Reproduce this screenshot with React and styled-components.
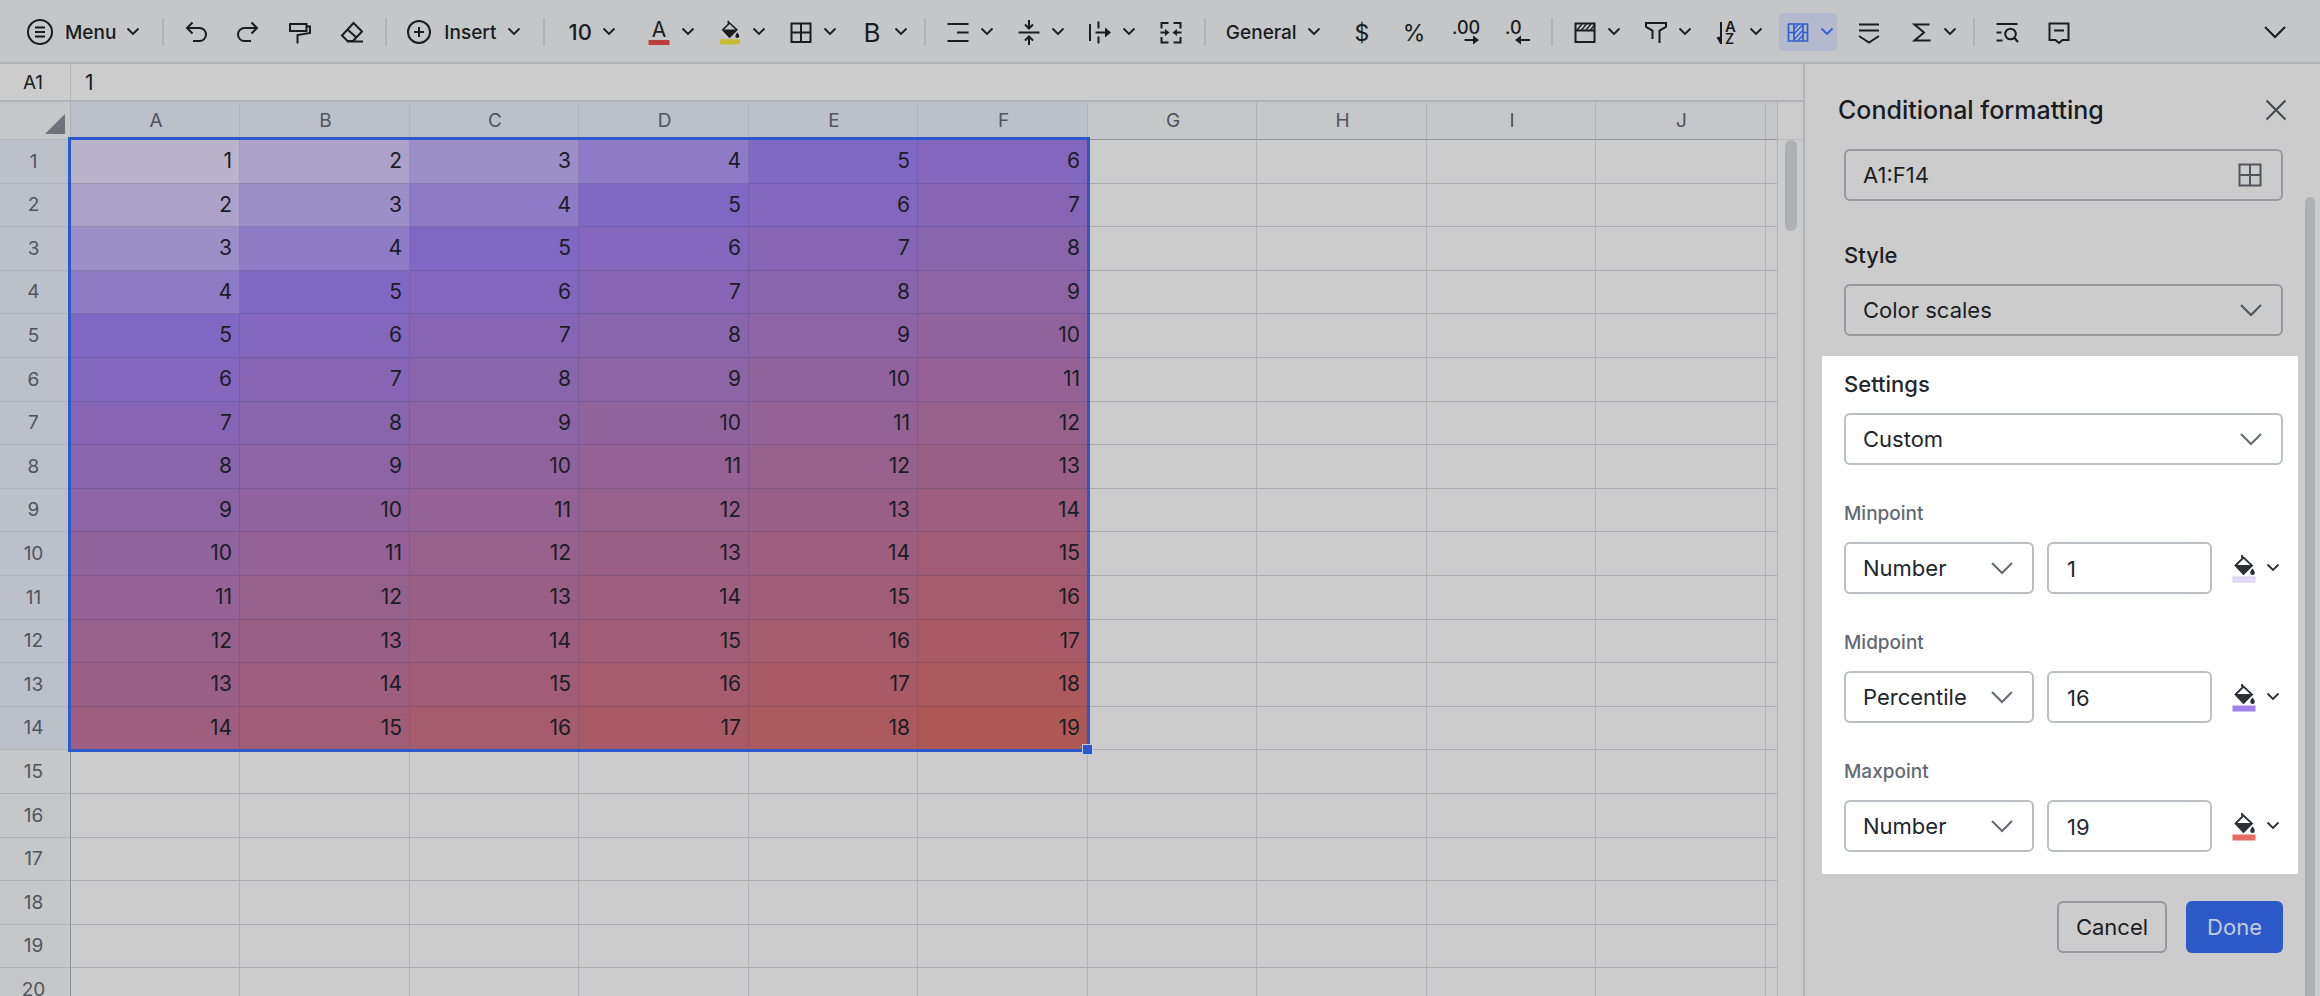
// src/App.jsx

import React, { useState } from "react"
import styled, { createGlobalStyle } from "styled-components"

const GlobalStyle = createGlobalStyle`
    * {
        box-sizing: border-box;
    }

    body {
        margin: 0;
        background: #cccccc;
        color: #191c21;
        font-family: Inter, "Liberation Sans", sans-serif;
    }

    button, input, select {
        margin: 0;
        font-family: inherit;
        color: inherit;
    }
`;

const Page = styled.div`
    display: flex;
    flex-direction: column;
    height: 100vh;
    overflow: hidden;
`;

/* ---------- toolbar ---------- */

const Toolbar = styled.header`
    display: flex;
    flex: none;
    align-items: center;
    gap: 13px;
    height: 64px;
    padding: 2px 26px 0 19px;
    border-bottom: 2px solid #b1b3b6;
    background: #c4c6c7;
`;

const ToolButton = styled.button`
    display: flex;
    flex: none;
    align-items: center;
    gap: 11px;
    height: 38px;
    padding: ${(props) => (props.$menu ? "0 4px 0 7px" : "0 8px 0 7px")};
    border: 0;
    border-radius: 6px;
    background: ${(props) => (props.$active ? "#b3bace" : "transparent")};
    color: ${(props) => (props.$active ? "#2f5fd0" : "inherit")};
    cursor: pointer;
`;

const TextButton = styled(ToolButton)`
    padding: ${(props) => (props.$large ? "0 12px 0 9px" : "0 10px 0 7px")};
    font-size: ${(props) => (props.$large ? "22px" : "19px")};
    font-weight: 500;
`;

const Caption = styled.span`
    padding-left: 2px;
`;

const Divider = styled.span`
    flex: none;
    width: 2px;
    height: 28px;
    background: #b1b3b6;
`;

const Spacer = styled.span`
    flex: 1;
`;

const Icon = styled.svg`
    display: block;
    flex: none;
    width: ${(props) => props.$w || 24}px;
    height: ${(props) => props.$h || 28}px;
    overflow: visible;
    fill: none;
    stroke: currentColor;
    stroke-width: 2;

    .solid {
        fill: currentColor;
        stroke: none;
    }

    .thin {
        stroke-width: 1.3;
    }

    text {
        fill: currentColor;
        stroke: none;
        font-family: Inter, sans-serif;
    }
`;

/* ---------- sheet ---------- */

const Workspace = styled.main`
    display: flex;
    flex: 1;
    min-height: 0;
`;

const SheetArea = styled.section`
    display: flex;
    flex: 1;
    flex-direction: column;
    min-width: 0;
`;

const FormulaBar = styled.div`
    display: flex;
    flex: none;
    height: 38px;
    border-bottom: 2px solid #b1b3b6;
`;

const NameBox = styled.input`
    width: 71px;
    padding: 0 4px 0 0;
    border: 0;
    border-right: 1px solid #b1b3b6;
    background: transparent;
    font-size: 19px;
    text-align: center;
`;

const FormulaInput = styled.input`
    flex: 1;
    min-width: 0;
    padding: 0 14px;
    border: 0;
    background: transparent;
    font-size: 21px;
`;

const GridRow = styled.div`
    display: flex;
    flex: 1;
    min-height: 0;
`;

const GridViewport = styled.div`
    position: relative;
    flex: 1;
    min-width: 0;
    overflow: hidden;
    border-right: 1px solid #b3b5b7;
`;

const Table = styled.table`
    width: 100%;
    table-layout: fixed;
    border-collapse: separate;
    border-spacing: 0;

    thead tr {
        height: 38px;
    }

    tbody tr {
        height: 44px;
    }

    tbody tr:nth-child(5n + 2),
    tbody tr:nth-child(5n + 4) {
        height: 43px;
    }
`;

const Corner = styled.td`
    width: 71px;
    padding: 0 5px 5px 0;
    border-right: 1px solid #b1b3b6;
    border-bottom: 1px solid #b1b3b6;
    background: #c6c7c9;
    vertical-align: bottom;

    svg {
        margin-left: auto;
    }
`;

const ColumnHead = styled.th`
    width: ${(props) => (props.$wide ? 170 : 169)}px;
    padding: 0 0 0 2px;
    border-right: 1px solid #b0b3b8;
    border-bottom: 1px solid #8f9195;
    background: ${(props) => (props.$selected ? "#bcc0c8" : "#c6c7c9")};
    color: #50555d;
    font-size: 19px;
    font-weight: 400;
    line-height: 24px;
`;

/* takes the width that is left after the last column */
const RestHead = styled.td`
    padding: 0;
    border-bottom: 1px solid #8f9195;
    background: #c6c7c9;
`;

const RowHead = styled.th`
    width: 71px;
    padding: 0 3px 0 0;
    border-right: 1px solid #8c8e93;
    border-bottom: 1px solid #b0b2b5;
    background: ${(props) => (props.$selected ? "#bcc0c8" : "#c6c7c9")};
    color: #50555d;
    font-size: 19px;
    font-weight: 400;
    line-height: 24px;
`;

const Cell = styled.td`
    padding: 0 7px 1px 0;
    border-right: 1px solid rgba(40, 50, 80, 0.16);
    border-bottom: 1px solid rgba(40, 50, 80, 0.2);
    color: #1b1d26;
    font-size: 21px;
    line-height: 24px;
    text-align: right;

    &:last-child {
        border-right: 0;
    }
`;

/* outline of A1:F14, laid over the cells */
const Selection = styled.div`
    position: absolute;
    top: 35px;
    left: 68px;
    width: 1022px;
    height: 615px;
    border: 3px solid #2b59cb;
    pointer-events: none;

    &::after {
        content: "";
        position: absolute;
        right: -6px;
        bottom: -6px;
        width: 9px;
        height: 9px;
        border: 1px solid #c9ccd4;
        background: #2b59cb;
    }
`;

const Gutter = styled.div`
    flex: none;
    width: 25px;
`;

const GutterHead = styled.div`
    height: 38px;
    border-bottom: 1px solid #b9babc;
`;

const SheetThumb = styled.div`
    width: 12px;
    height: 91px;
    margin: 0 auto;
    border-radius: 6px;
    background: #afb0b4;
`;

/* ---------- side panel ---------- */

const Panel = styled.aside`
    display: flex;
    flex: none;
    width: 517px;
    border-left: 2px solid #b1b3b6;
`;

const PanelContent = styled.form`
    flex: 1;
    min-width: 0;
    padding: 0 7px 0 17px;
`;

const PanelHead = styled.div`
    display: flex;
    align-items: center;
    justify-content: space-between;
    height: 85px;
    padding: 6px 11px 0 16px;
`;

const Title = styled.h2`
    margin: 0;
    font-size: 25px;
    font-weight: 500;
    line-height: 32px;
`;

const CloseButton = styled.button`
    padding: 0;
    border: 0;
    background: transparent;
    color: #43474e;
    cursor: pointer;
`;

const Section = styled.section`
    padding: ${(props) => (props.$highlight ? "16px 15px 22px 22px" : "0 15px 20px 22px")};
    background: ${(props) => (props.$highlight ? "#ffffff" : "transparent")};
    color: ${(props) => (props.$highlight ? "#22262d" : "#1b1e23")};
    --line: ${(props) => (props.$highlight ? "#bbbfc4" : "#96989d")};
    --muted: ${(props) => (props.$highlight ? "#646a73" : "#50555c")};
`;

const FieldLabel = styled.label`
    display: block;
    margin: ${(props) => props.$top || 0}px 0 17px;
    font-size: 22px;
    font-weight: 500;
    line-height: 24px;
`;

const PointLabel = styled.label`
    display: block;
    margin: 37px 0 16px;
    color: var(--muted);
    font-size: 19px;
    font-weight: 500;
    line-height: 24px;
`;

/* the control and its glyph share one grid cell */
const Field = styled.div`
    display: grid;
    align-items: center;

    & > * {
        grid-area: 1 / 1;
    }

    svg {
        justify-self: end;
        margin-right: 21px;
        color: var(--muted);
        pointer-events: none;
    }
`;

const Input = styled.input`
    width: 100%;
    min-width: 0;
    height: 52px;
    padding: 0 17px;
    border: 2px solid var(--line);
    border-radius: 6px;
    background: transparent;
    font-size: 22px;
`;

const ValueInput = styled(Input)`
    padding: 2px 18px 0;
`;

const Select = styled.select`
    width: 100%;
    height: 52px;
    padding: 0 17px;
    border: 2px solid var(--line);
    border-radius: 6px;
    background: transparent;
    font-size: 22px;
    appearance: none;
`;

const PointRow = styled.div`
    display: grid;
    grid-template-columns: 190px 1fr auto;
    gap: 13px;
`;

const ColorButton = styled.button`
    display: flex;
    align-items: center;
    gap: 11px;
    padding: 0 4px 0 7px;
    border: 0;
    background: transparent;
    color: #2b2f36;
    cursor: pointer;
`;

const Footer = styled.div`
    display: flex;
    justify-content: flex-end;
    gap: 19px;
    padding: 27px 15px 0 0;
`;

const ActionButton = styled.button`
    height: 52px;
    padding: 0 ${(props) => (props.$primary ? 21 : 17)}px;
    border: ${(props) => (props.$primary ? "0" : "2px solid #96989d")};
    border-radius: 6px;
    background: ${(props) => (props.$primary ? "#2c5ac8" : "transparent")};
    color: ${(props) => (props.$primary ? "#c3cbde" : "#1b1e23")};
    font-size: 22px;
    cursor: pointer;
`;

const PanelTrack = styled.div`
    flex: none;
    width: 15px;
    padding-top: 133px;
`;

const PanelThumb = styled.div`
    width: 10px;
    height: 100%;
    border-radius: 5px 5px 0 0;
    background: #afb0b2;
`;

/* ---------- icons ---------- */

const Chevron = () => (
    <Icon $w={12} $h={8} viewBox="0 0 12 8">
        <path d="M0.500 0.500L6 6l5.500-5.500" strokeWidth="1.8" />
    </Icon>
)

const BigChevron = () => (
    <Icon $w={22} $h={12} viewBox="0 0 22 12">
        <path d="M1 1l10 10L21 1" />
    </Icon>
)

const Bucket = ({ bar, line, small }) => (
    <Icon $h={small ? 24 : 28} viewBox="0 0 24 28">
        <path d="M10 1v3M3.500 11.500L11.500 3.500l8.500 8-8.500 8.500z" strokeWidth="1.8" />
        <path className="solid" d="M3 11h17.500l-9 9.500z" />
        <path className="solid" d="M20.500 14.500c1.600 2 2.300 3.200 2.300 4.300a2.300 2.300 0 0 1-4.600 0c0-1.100.7-2.300 2.300-4.300z" />
        <rect x="1" y="23" width="22" height="5" style={{ fill: bar, stroke: line || bar }} strokeWidth="1" />
    </Icon>
)

const Grid = () => (
    <Icon $h={24} viewBox="0 0 24 24">
        <path d="M1.500 1.500h21v21h-21zM12 2v20M2 12h20" />
    </Icon>
)

const icons = {
    undo: <path d="M8.500 4.500L3 10l5.500 5.500M3 10h12.500a6.500 6.500 0 0 1 0 13H9" />,
    redo: <path d="M15.500 4.500L21 10l-5.500 5.500M21 10H8.500a6.500 6.500 0 0 0 0 13H15" />,
    painter: <path d="M2 6h16.500v7H2zM18.500 8.500H22V15l-12.500 2v8.500" />,
    eraser: <path d="M13.500 5l8.500 8.500-9 9.500H7.500L2 17.500zM7.500 11.500L17 20M7 23.500h16" />,
    borders: <path d="M2.500 5.500h19V24h-19zM12 5.500V24M2.500 14.500h19" />,
    align: <path d="M1.500 6h21M11 14.500h11.500M1.500 23h21" />,
    valign: <path d="M1.500 14.500h21M12 2v8M8 6.500l4 4 4-4M12 27v-8M8 22.500l4-4 4 4" />,
    overflow: (
        <>
            <path d="M2 6v17M10.500 3.500v7M10.500 18.500v7M7.500 14.500h11" />
            <path className="solid" d="M17 9.500l6 5-6 5z" />
        </>
    ),
    merge: (
        <>
            <path d="M9.500 5H2.500v5.500M14.500 5h7v5.500M9.500 24.500h-7V19M14.500 24.500h7V19M1.500 14.500h5M22.500 14.500h-5" />
            <path className="solid" d="M6 11l4.500 3.500L6 18zM18 11l-4.500 3.500L18 18z" />
        </>
    ),
    freeze: (
        <>
            <path d="M2.500 5.500h19V24h-19zM2.500 12.500h19" />
            <path className="thin" d="M4 12l5-6M8.500 12l5-6M13 12l5-6M17.500 12l4-5" />
        </>
    ),
    filter: <path d="M8.500 21v-8.500L2 9V5h20v4l-6.500 3.500V25" />,
    sort: (
        <>
            <path d="M6 4v22" />
            <path className="solid" d="M1.500 19.500L5 18.500v7z" />
            <text x="10" y="14" fontSize="15" fontWeight="600">A</text>
            <text x="10" y="26" fontSize="14" fontWeight="600">Z</text>
        </>
    ),
    conditional: (
        <>
            <path d="M2.500 6h19v17h-19zM8 6v17M17 6v17M2.500 14.500H8M17 14.500h4.500" strokeWidth="1.7" />
            <path className="thin" d="M8 11l5-5M8 16l9-9.500M8 21.500l9-9.500M12 22.500l5-5.500" />
        </>
    ),
    collapse: <path d="M2 6.500h20M2 12.500h20M2 18l10 6.500L22 18" />,
    sum: <path d="M20.500 6.500H5.500l9.500 8-9.500 8h16" />,
    find: (
        <>
            <path d="M1.500 6h21M1.500 14.500h5M1.500 22.500h6" />
            <circle cx="15.500" cy="16" r="5.300" />
            <path d="M19.500 20l3.500 4" />
        </>
    ),
    comment: <path d="M2.500 5.500h19v16.500h-6L12 25l-3.500-3H2.500zM7 12.500h10" />,
}

const toolIcon = (name) => <Icon viewBox="0 0 24 28">{icons[name]}</Icon>

const fontColorIcon = (
    <Icon viewBox="0 0 24 28">
        <text x="12" y="19" fontSize="21" textAnchor="middle">A</text>
        <rect x="2" y="22.500" width="20" height="4" style={{ fill: "#b9403b", stroke: "#b9403b" }} strokeWidth="1" />
    </Icon>
)

const boldIcon = (
    <Icon viewBox="0 0 24 28">
        <text x="12" y="24" fontSize="26" textAnchor="middle">B</text>
    </Icon>
)

const signIcon = (sign) => (
    <Icon viewBox="0 0 24 28">
        <text x="12" y="23" fontSize="23" textAnchor="middle">{sign}</text>
    </Icon>
)

const moreDecimals = (
    <Icon viewBox="0 0 24 28">
        <text x="-2" y="16" fontSize="18" fontWeight="500">.00</text>
        <path d="M10.500 22h11" />
        <path className="solid" d="M19 17.500l6 4.500-6 4.500z" />
    </Icon>
)

const fewerDecimals = (
    <Icon viewBox="0 0 24 28">
        <text x="-1" y="16" fontSize="18" fontWeight="500">.0</text>
        <path d="M12 22h12" />
        <path className="solid" d="M15 17.500L9 22l6 4.500z" />
    </Icon>
)

/* ---------- data ---------- */

const columns = "ABCDEFGHIJ".split("")
const rows = Array.from({ length: 20 }, (_, i) => i + 1)
const selectedColumns = 6
const selectedRows = 14

const low = [185, 180, 202]
const middle = [127, 104, 196]
const high = [175, 89, 86]

function mix(from, to, ratio) {
    return `rgb(${from.map((c, i) => Math.round(c + (to[i] - c) * ratio)).join(", ")})`
}

function scaleColor(value) {
    return value < 5 ? mix(low, middle, (value - 1) / 4) : mix(middle, high, (value - 5) / 14)
}

const startPoints = [
    { id: "min", label: "Minpoint", type: "Number", value: "1", color: "#e5dbf9", line: "#d2c8e8" },
    { id: "mid", label: "Midpoint", type: "Percentile", value: "16", color: "#a083ec" },
    { id: "max", label: "Maxpoint", type: "Number", value: "19", color: "#e56d66" },
]

function MenuTool({ label, active, children }) {
    return (
        <ToolButton type="button" aria-label={label} $menu $active={active}>
            {children}
            <Chevron />
        </ToolButton>
    )
}

function Tool({ label, children }) {
    return <ToolButton type="button" aria-label={label}>{children}</ToolButton>
}

function TopToolbar() {
    return (
        <Toolbar>
            <TextButton type="button">
                <Icon $w={28} viewBox="0 0 28 28">
                    <circle cx="14" cy="14" r="12" />
                    <path d="M9 9.500h10M9 14h10M9 18.500h10" />
                </Icon>
                Menu
                <Chevron />
            </TextButton>
            <Divider />
            <Tool label="Undo">{toolIcon("undo")}</Tool>
            <Tool label="Redo">{toolIcon("redo")}</Tool>
            <Tool label="Format painter">{toolIcon("painter")}</Tool>
            <Tool label="Clear format">{toolIcon("eraser")}</Tool>
            <Divider />
            <TextButton type="button">
                <Icon viewBox="0 0 24 28">
                    <circle cx="12" cy="14" r="11" />
                    <path d="M12 9v10M7 14h10" />
                </Icon>
                <Caption>Insert</Caption>
                <Chevron />
            </TextButton>
            <Divider />
            <TextButton type="button" $large aria-label="Font size 10">
                <Caption>10</Caption>
                <Chevron />
            </TextButton>
            <MenuTool label="Font color">{fontColorIcon}</MenuTool>
            <MenuTool label="Fill color"><Bucket small bar="#c6bd35" /></MenuTool>
            <MenuTool label="Borders">{toolIcon("borders")}</MenuTool>
            <MenuTool label="Bold">{boldIcon}</MenuTool>
            <Divider />
            <MenuTool label="Horizontal align">{toolIcon("align")}</MenuTool>
            <MenuTool label="Vertical align">{toolIcon("valign")}</MenuTool>
            <MenuTool label="Text overflow">{toolIcon("overflow")}</MenuTool>
            <Tool label="Merge cells">{toolIcon("merge")}</Tool>
            <Divider />
            <TextButton type="button">
                General
                <Chevron />
            </TextButton>
            <Tool label="Currency">{signIcon("$")}</Tool>
            <Tool label="Percent">{signIcon("%")}</Tool>
            <Tool label="More decimals">{moreDecimals}</Tool>
            <Tool label="Fewer decimals">{fewerDecimals}</Tool>
            <Divider />
            <MenuTool label="Freeze">{toolIcon("freeze")}</MenuTool>
            <MenuTool label="Filter">{toolIcon("filter")}</MenuTool>
            <MenuTool label="Sort">{toolIcon("sort")}</MenuTool>
            <MenuTool label="Conditional formatting" active>{toolIcon("conditional")}</MenuTool>
            <Tool label="Group">{toolIcon("collapse")}</Tool>
            <MenuTool label="Functions">{toolIcon("sum")}</MenuTool>
            <Divider />
            <Tool label="Find">{toolIcon("find")}</Tool>
            <Tool label="Comment">{toolIcon("comment")}</Tool>
            <Spacer />
            <Tool label="Collapse toolbar"><BigChevron /></Tool>
        </Toolbar>
    )
}

function Sheet() {
    return (
        <GridRow>
            <GridViewport>
                <Table>
                    <thead>
                        <tr>
                            <Corner>
                                <Icon $w={20} $h={20} viewBox="0 0 20 20">
                                    <path d="M20 0v20H0z" style={{ fill: "#6e737b", stroke: "none" }} />
                                </Icon>
                            </Corner>
                            {columns.map((name, i) => (
                                <ColumnHead key={name} scope="col" $wide={i % 2 === 1} $selected={i < selectedColumns}>
                                    {name}
                                </ColumnHead>
                            ))}
                            <RestHead />
                        </tr>
                    </thead>
                    <tbody>
                        {rows.map((row) => (
                            <tr key={row}>
                                <RowHead scope="row" $selected={row <= selectedRows}>{row}</RowHead>
                                {columns.map((name, i) => {
                                    if (row > selectedRows || i >= selectedColumns) {
                                        return <Cell key={name} />
                                    }
                                    const value = row + i
                                    return (
                                        <Cell key={name} style={{ backgroundColor: scaleColor(value) }}>
                                            {value}
                                        </Cell>
                                    )
                                })}
                                <Cell />
                            </tr>
                        ))}
                    </tbody>
                </Table>
                <Selection />
            </GridViewport>
            <Gutter>
                <GutterHead />
                <SheetThumb />
            </Gutter>
        </GridRow>
    )
}

function PointSetting({ point, onChange }) {
    return (
        <>
            <PointLabel htmlFor={`${point.id}-type`}>{point.label}</PointLabel>
            <PointRow>
                <Field>
                    <Select
                        id={`${point.id}-type`}
                        value={point.type}
                        onChange={(e) => onChange({ ...point, type: e.target.value })}
                    >
                        <option>Number</option>
                        <option>Percentile</option>
                    </Select>
                    <BigChevron />
                </Field>
                <ValueInput
                    aria-label={`${point.label} value`}
                    value={point.value}
                    onChange={(e) => onChange({ ...point, value: e.target.value })}
                />
                <ColorButton type="button" aria-label={`${point.label} color`}>
                    <Bucket bar={point.color} line={point.line} />
                    <Chevron />
                </ColorButton>
            </PointRow>
        </>
    )
}

function FormatPanel() {
    const [points, setPoints] = useState(startPoints)

    const handleChange = (next) => {
        setPoints(points.map((p) => (p.id === next.id ? next : p)))
    }

    return (
        <Panel>
            <PanelContent>
                <PanelHead>
                    <Title>Conditional formatting</Title>
                    <CloseButton type="button" aria-label="Close">
                        <Icon $w={22} $h={22} viewBox="0 0 22 22">
                            <path d="M1.500 1.500l19 19M20.500 1.500l-19 19" />
                        </Icon>
                    </CloseButton>
                </PanelHead>
                <Section>
                    <Field>
                        <Input aria-label="Range" defaultValue="A1:F14" />
                        <Grid />
                    </Field>
                    <FieldLabel htmlFor="style" $top={42}>Style</FieldLabel>
                    <Field>
                        <Select id="style" defaultValue="Color scales">
                            <option>Color scales</option>
                        </Select>
                        <BigChevron />
                    </Field>
                </Section>
                <Section $highlight>
                    <FieldLabel htmlFor="settings">Settings</FieldLabel>
                    <Field>
                        <Select id="settings" defaultValue="Custom">
                            <option>Custom</option>
                        </Select>
                        <BigChevron />
                    </Field>
                    {points.map((point) => (
                        <PointSetting key={point.id} point={point} onChange={handleChange} />
                    ))}
                </Section>
                <Footer>
                    <ActionButton type="button">Cancel</ActionButton>
                    <ActionButton type="button" $primary>Done</ActionButton>
                </Footer>
            </PanelContent>
            <PanelTrack>
                <PanelThumb />
            </PanelTrack>
        </Panel>
    )
}

function App() {
    return (
        <Page>
            <GlobalStyle />
            <TopToolbar />
            <Workspace>
                <SheetArea>
                    <FormulaBar>
                        <NameBox aria-label="Cell" defaultValue="A1" />
                        <FormulaInput aria-label="Formula" defaultValue="1" />
                    </FormulaBar>
                    <Sheet />
                </SheetArea>
                <FormatPanel />
            </Workspace>
        </Page>
    );
}

export default App;
